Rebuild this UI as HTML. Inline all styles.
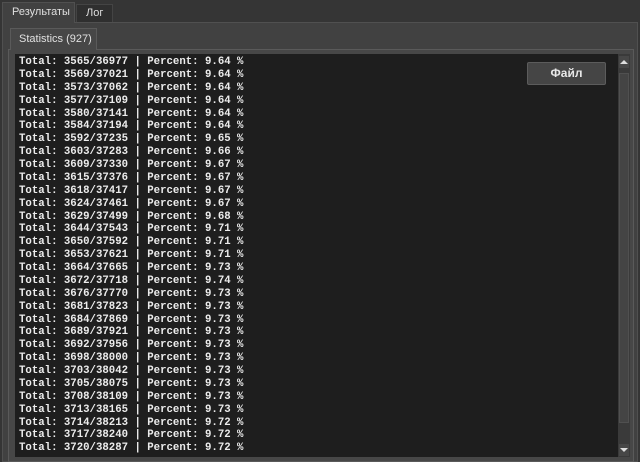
<!DOCTYPE html>
<html><head><meta charset="utf-8"><style>
*{margin:0;padding:0;box-sizing:border-box}
body{width:640px;height:462px;background:#353535;overflow:hidden;position:relative;font-family:"Liberation Sans","DejaVu Sans",sans-serif}
.abs{position:absolute;white-space:nowrap}
.tab1{left:2px;top:2px;width:73px;height:21px;background:#414141;border:1px solid #505050;border-bottom:none;color:#e0e0e0;font-size:11px;line-height:19px;padding-left:9px;z-index:2;overflow:hidden}
.tab2{left:76px;top:4px;width:37px;height:18px;background:#2f2f2f;border:1px solid #444;border-bottom:none;color:#ddd;font-size:11px;line-height:17px;padding-left:9px}
.outer{left:2px;top:22px;width:636px;height:440px;background:#414141;border:1px solid #505050}
.itab{left:10px;top:28px;width:87px;height:22px;background:#474747;border:1px solid #5a5a5a;border-bottom:none;color:#e0e0e0;font-size:11px;line-height:21px;padding-left:8px;z-index:2;overflow:hidden}
.inner{left:8px;top:49px;width:626px;height:413px;background:#474747;border:1px solid #5a5a5a}
.log{left:15px;top:54px;width:603px;height:403px;background:#1e1e1e}
.lines{left:19px;top:56px;font-family:"Liberation Mono","DejaVu Sans Mono",monospace;font-weight:bold;font-size:10.7px;line-height:12.87px;color:#ececec;white-space:pre}
.sb{left:618px;top:54px;width:12px;height:403px;background:#3a3a3a}
.thumb{left:619px;top:73px;width:10px;height:350px;background:#444;border:1px solid #505050}
.btn{left:527px;top:62px;width:79px;height:23px;background:#454545;border:1px solid #5c5c5c;border-radius:2px;color:#e8e8e8;font-size:12px;font-weight:bold;text-align:center;line-height:21px}
</style></head><body>
<div class="abs outer"></div>
<div class="abs tab1">Результаты</div>
<div class="abs tab2">Лог</div>
<div class="abs inner"></div>
<div class="abs itab">Statistics (927)</div>
<div class="abs log"></div>
<div class="abs lines">Total: 3565/36977 | Percent: 9.64 %
Total: 3569/37021 | Percent: 9.64 %
Total: 3573/37062 | Percent: 9.64 %
Total: 3577/37109 | Percent: 9.64 %
Total: 3580/37141 | Percent: 9.64 %
Total: 3584/37194 | Percent: 9.64 %
Total: 3592/37235 | Percent: 9.65 %
Total: 3603/37283 | Percent: 9.66 %
Total: 3609/37330 | Percent: 9.67 %
Total: 3615/37376 | Percent: 9.67 %
Total: 3618/37417 | Percent: 9.67 %
Total: 3624/37461 | Percent: 9.67 %
Total: 3629/37499 | Percent: 9.68 %
Total: 3644/37543 | Percent: 9.71 %
Total: 3650/37592 | Percent: 9.71 %
Total: 3653/37621 | Percent: 9.71 %
Total: 3664/37665 | Percent: 9.73 %
Total: 3672/37718 | Percent: 9.74 %
Total: 3676/37770 | Percent: 9.73 %
Total: 3681/37823 | Percent: 9.73 %
Total: 3684/37869 | Percent: 9.73 %
Total: 3689/37921 | Percent: 9.73 %
Total: 3692/37956 | Percent: 9.73 %
Total: 3698/38000 | Percent: 9.73 %
Total: 3703/38042 | Percent: 9.73 %
Total: 3705/38075 | Percent: 9.73 %
Total: 3708/38109 | Percent: 9.73 %
Total: 3713/38165 | Percent: 9.73 %
Total: 3714/38213 | Percent: 9.72 %
Total: 3717/38240 | Percent: 9.72 %
Total: 3720/38287 | Percent: 9.72 %</div>
<div class="abs sb"></div>
<div class="abs thumb"></div>
<div class="abs" style="left:619px;top:56px;width:10px;height:12px;background:#474747"></div>
<div class="abs" style="left:620px;top:60px;width:0;height:0;border-left:4px solid transparent;border-right:4px solid transparent;border-bottom:4px solid #ddd"></div>
<div class="abs" style="left:619px;top:444px;width:10px;height:12px;background:#474747"></div>
<div class="abs" style="left:620px;top:448px;width:0;height:0;border-left:4px solid transparent;border-right:4px solid transparent;border-top:4px solid #ddd"></div>
<div class="abs btn">Файл</div>
</body></html>
